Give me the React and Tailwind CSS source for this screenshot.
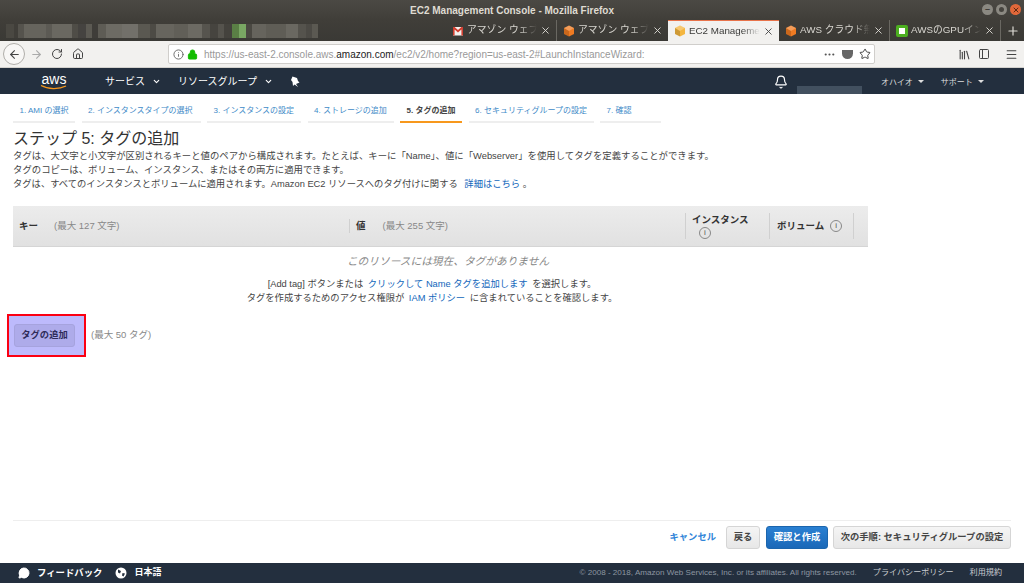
import React from "react";
import { ArrowLeft, ArrowRight, RotateCw, Home, Info, Lock, Star, Library, PanelLeft, Menu, X, Plus, Bell, ChevronDown, MessageCircle, Ellipsis } from "lucide-react";

const font = "font-['Liberation_Sans','Noto_Sans_CJK_JP',sans-serif]";

const blurred = [
  [8, "#4a4842"], [4, "#403e39"], [6, "#55534d"], [22, "#66645d"], [6, "#5c5a54"], [20, "#6a6861"], [6, "#4f4d47"], [8, "#454340"],
  [6, "#5c5a53"], [6, "#3f3d39"], [8, "#5e5c55"], [16, "#6d6b64"], [16, "#72706a"], [12, "#5a5851"], [6, "#4d4b45"], [18, "#67655e"],
  [14, "#615f58"], [14, "#6c6a63"], [8, "#56544e"], [8, "#46443f"], [6, "#55534d"], [8, "#44423d"], [7, "#5a7f45"], [7, "#79a763"],
  [6, "#4a4842"], [14, "#66645d"], [20, "#5f5d56"], [12, "#6a6861"], [8, "#55534d"], [6, "#4c4a45"], [6, "#5b5952"],
];

function BrowserTab({ icon, label, active, sep = true }) {
  if (active) {
    return (
      <div className="flex h-[21px] w-[111px] items-center gap-[3px] border-t border-[#e8734a] bg-[#f2f1ef] pl-[6px] pr-[5px] text-[9.8px] text-[#3a3a38]">
        {icon}
        <span className="flex-1 overflow-hidden whitespace-nowrap [mask-image:linear-gradient(to_right,black_75%,transparent)]">{label}</span>
        <X size={11} strokeWidth={2} className="shrink-0 text-[#444]" />
      </div>
    );
  }
  return (
    <div className={`flex h-[21px] w-[111px] items-center gap-[3px] pl-[6px] pr-[5px] text-[9.8px] text-[#d8d6d0] ${sep ? "border-r border-[#6a6862]" : ""}`}>
      {icon}
      <span className="flex-1 overflow-hidden whitespace-nowrap [mask-image:linear-gradient(to_right,black_75%,transparent)]">{label}</span>
      <X size={11} strokeWidth={2} className="shrink-0 text-[#dedcd6]" />
    </div>
  );
}

function Cube({ color = "#ef7b22" }) {
  return (
    <svg width="12" height="12" viewBox="0 0 12 12" className="shrink-0">
      <path d="M6 0.5 11 3v6l-5 2.5L1 9V3z" fill={color} />
      <path d="M6 6v5.5L1 9V3z" fill="#000" fillOpacity="0.15" />
      <path d="M6 0.5 11 3 6 6 1 3z" fill="#fff" fillOpacity="0.25" />
    </svg>
  );
}

function Gmail() {
  return (
    <svg width="12" height="12" viewBox="0 0 12 12" className="shrink-0">
      <rect x="1" y="2" width="10" height="8.5" fill="#f5f2ef" />
      <path d="M1 2h1.6L6 5l3.4-3H11v8.5H9.4V4.6L6 7.4 2.6 4.6v5.9H1z" fill="#d23f31" />
    </svg>
  );
}

function Caret() {
  return <span className="ml-[5px] h-0 w-0 border-x-[3px] border-t-[3px] border-x-transparent border-t-[#dddddd]" />;
}

function WizardStep({ label, active, width }) {
  return (
    <div className={`flex h-[29px] items-center border-b-2 pl-[6.5px] pt-[7px] text-[8px] ${active ? "border-[#f7981d] font-bold text-[#444]" : "border-[#eeeeee] text-[#3f8bc8]"} ${width}`}>
      {label}
    </div>
  );
}

function InfoDot({ className = "" }) {
  return (
    <span className={`inline-flex h-[12px] w-[12px] items-center justify-center rounded-full border border-[#888] text-[8px] leading-none text-[#555] ${className}`}>
      i
    </span>
  );
}

export default function App() {
  return (
    <div className={`flex h-[583px] w-[1024px] flex-col overflow-hidden bg-white ${font}`}>
      {/* window title */}
      <div className="relative flex h-5 shrink-0 items-center justify-center bg-gradient-to-b from-[#4b4944] to-[#403e39] text-[10px] font-bold text-[#dfdbd2]">
        EC2 Management Console - Mozilla Firefox
        <div className="absolute right-[3px] top-[4px] flex gap-[3px]">
          <span className="flex h-[11px] w-[11px] items-center justify-center rounded-full bg-[#8b8982] text-[9px] leading-none text-[#3f3d38]">–</span>
          <span className="h-[11px] w-[11px] rounded-full border-[3px] border-[#8b8982]" />
          <span className="flex h-[11px] w-[11px] items-center justify-center rounded-full bg-[#e2683a] text-[#5a2a14]"><X size={8} strokeWidth={3} /></span>
        </div>
      </div>

      {/* tabs */}
      <div className="flex h-[21px] shrink-0 items-end bg-gradient-to-b from-[#403e39] to-[#3a3935]">
        <div className="flex h-[14px] w-[446px] shrink-0 self-center pl-[6px]">
          {blurred.map(([w, c], i) => (
            <div key={i} className="h-full" style={{ width: w, background: c }} />
          ))}
        </div>
        <BrowserTab icon={<Gmail />} label="アマゾン ウェブ" />
        <BrowserTab icon={<Cube />} label="アマゾン ウェブ" sep={false} />
        <BrowserTab icon={<Cube color="#f4b63f" />} label="EC2 Management" active />
        <BrowserTab icon={<Cube />} label="AWS クラウド無" />
        <BrowserTab icon={<span className="h-3 w-3 shrink-0 rounded-[2px] border-[3px] border-[#4caf20] bg-white" />} label="AWSのGPUイン" />
        <div className="flex h-[21px] flex-1 items-center justify-center text-[#dedcd6]"><Plus size={14} strokeWidth={2} /></div>
      </div>

      {/* toolbar */}
      <div className="flex h-[27px] shrink-0 items-center border-b border-[#d4d2ce] bg-[#f2f1ef] text-[#444]">
        <div className="ml-[3px] flex h-[22px] w-[22px] items-center justify-center rounded-full border border-[#b0aeaa] bg-[#f8f7f6]"><ArrowLeft size={13} /></div>
        <ArrowRight size={13} className="ml-[5px] text-[#aaa]" />
        <RotateCw size={12} className="ml-[8px]" />
        <Home size={12} className="ml-[9px]" />
        <div className="ml-[84px] flex h-[20px] w-[707px] items-center rounded-[2px] border border-[#d0cecb] bg-white pl-[4px] pr-[3px] text-[10px] text-[#999]">
          <Info size={11} className="text-[#666]" />
          <Lock size={11} className="ml-[3px] fill-[#12bc00] text-[#12bc00]" />
          <span className="ml-[6px] flex-1 whitespace-nowrap">https://us-east-2.console.aws.<span className="text-[#222]">amazon.com</span>/ec2/v2/home?region=us-east-2#LaunchInstanceWizard:</span>
          <Ellipsis size={13} className="text-[#555]" />
          <span className="ml-[6px] h-[9px] w-[11px] rounded-b-md bg-[#666]" />
          <Star size={12} className="ml-[6px] text-[#444]" />
        </div>
        <Library size={13} className="ml-[83px]" />
        <PanelLeft size={12} className="ml-[7px]" />
        <Menu size={13} className="ml-[15px]" />
      </div>

      {/* aws nav */}
      <div className="flex h-[26px] shrink-0 items-center bg-[#232f3e] text-white">
        <div className="ml-[40px] flex w-[28px] flex-col items-center">
          <span className="text-[14px] leading-[12px]">aws</span>
          <svg width="28" height="5" viewBox="0 0 28 5"><path d="M1 0.5C8 4.5 19 4.5 26 1" fill="none" stroke="#f7981d" strokeWidth="1.3" /></svg>
        </div>
        <span className="ml-[37px] text-[10px]">サービス</span>
        <ChevronDown size={9} strokeWidth={3} className="ml-[7px]" />
        <span className="ml-[17px] text-[10px]">リソースグループ</span>
        <ChevronDown size={9} strokeWidth={3} className="ml-[7px]" />
        <svg width="10" height="11" viewBox="0 0 10 11" className="ml-[17px] mt-[1px]"><path d="M2.5 0.5 7 2 8 5l1.5 1.5L6 8l2 3-3.5-2.5L3 10 2.5 6 1 4z" fill="#fff" /></svg>
        <Bell size={14} className="ml-[474px] mt-[2px]" />
        <div className="ml-[9px] h-[8px] w-[65px] self-end bg-[#42505f]" />
        <span className="ml-[19px] mt-[3px] text-[8px] text-[#dddddd]">オハイオ</span>
        <Caret />
        <span className="ml-[17px] mt-[3px] text-[8px] text-[#dddddd]">サポート</span>
        <Caret />
      </div>

      {/* wizard steps */}
      <div className="flex shrink-0 gap-[6.5px] pl-[13px]">
        <WizardStep label="1. AMI の選択" width="w-[62px]" />
        <WizardStep label="2. インスタンスタイプの選択" width="w-[119px]" />
        <WizardStep label="3. インスタンスの設定" width="w-[94px]" />
        <WizardStep label="4. ストレージの追加" width="w-[86px]" />
        <WizardStep label="5. タグの追加" active width="w-[62px]" />
        <WizardStep label="6. セキュリティグループの設定" width="w-[125px]" />
        <WizardStep label="7. 確認" width="w-[61px]" />
      </div>

      {/* main */}
      <div className="flex min-h-0 flex-1 flex-col px-[13px]">
        <h1 className="mt-[5px] text-[16px] leading-[22px] text-[#333]">ステップ 5: タグの追加</h1>
        <div className="-mt-[1px] text-[9.4px] leading-[14px] text-[#444]">
          <p>タグは、大文字と小文字が区別されるキーと値のペアから構成されます。たとえば、キーに「Name」、値に「Webserver」を使用してタグを定義することができます。</p>
          <p>タグのコピーは、ボリューム、インスタンス、またはその両方に適用できます。</p>
          <p className="text-[9.3px]">タグは、すべてのインスタンスとボリュームに適用されます。Amazon EC2 リソースへのタグ付けに関する <span className="ml-[4px] text-[#1166bb]">詳細はこちら</span> 。</p>
        </div>

        <div className="mt-[15px] flex h-[41px] w-[855px] shrink-0 items-center border-b border-[#d5d5d5] bg-gradient-to-b from-[#ececec] to-[#e1e1e1] text-[9.5px]">
          <div className="flex w-[336px] items-center pl-[6px]">
            <span className="font-bold text-[#333]">キー</span>
            <span className="ml-[16px] text-[#888]">(最大 127 文字)</span>
          </div>
          <div className="flex h-[14px] w-[336px] items-center border-l border-[#d0d0d0] pl-[6px]">
            <span className="font-bold text-[#333]">値</span>
            <span className="ml-[17px] text-[#888]">(最大 255 文字)</span>
          </div>
          <div className="flex h-[26px] w-[84px] flex-col items-start border-l border-[#d0d0d0] pl-[6px] leading-[13px]">
            <span className="font-bold text-[#333]">インスタンス</span>
            <InfoDot className="ml-[7px] mt-[1px]" />
          </div>
          <div className="flex h-[26px] w-[85px] items-center border-x border-[#d0d0d0] pl-[7px]">
            <span className="font-bold text-[#333]">ボリューム</span>
            <InfoDot className="ml-[6px]" />
          </div>
        </div>

        <div className="w-[855px] text-center text-[9.3px] text-[#444]">
          <p className="mt-[6px] pl-[15px] text-[10.7px] italic text-[#888]">このリソースには現在、タグがありません</p>
          <p className="mt-[8px] pr-[17px] leading-[14px]">[Add tag] ボタンまたは <span className="mx-[2px] text-[#1166bb]">クリックして Name タグを追加します</span> を選択します。</p>
          <p className="pr-[17px] leading-[14px]">タグを作成するためのアクセス権限が <span className="mx-[2px] text-[#1166bb]">IAM ポリシー</span> に含まれていることを確認します。</p>
        </div>

        <div className="mt-[9px] flex items-center">
          <div className="relative -ml-[6px] flex h-[43px] w-[79px] items-center justify-center border-2 border-[#fb0012] bg-[#bdbafc]">
            <div className="-ml-[4px] flex h-[23px] w-[61px] items-center justify-center rounded-[3px] border border-[#a6a3de] bg-[#aeabea] text-[9.3px] font-bold text-[#2f2c59]">
              タグの追加
            </div>
          </div>
          <span className="ml-[5px] text-[9.5px] text-[#888]">(最大 50 タグ)</span>
        </div>

        <div className="mt-auto flex h-[43px] shrink-0 items-center justify-end border-t border-[#eeeeee] pb-[9px] text-[9.3px] font-bold">
          <span className="text-[#2f84d8]">キャンセル</span>
          <button className="ml-[10px] h-[23px] w-[34px] rounded-[3px] border border-[#d5d5d5] bg-gradient-to-b from-[#f5f5f5] to-[#e7e7e7] text-[#444]">戻る</button>
          <button className="ml-[6px] h-[23px] w-[62px] rounded-[3px] border border-[#1b65ad] bg-gradient-to-b from-[#2a80d2] to-[#1a68b8] text-white">確認と作成</button>
          <button className="ml-[5px] h-[23px] w-[178px] rounded-[3px] border border-[#d5d5d5] bg-gradient-to-b from-[#f5f5f5] to-[#e7e7e7] text-[#444]">次の手順: セキュリティグループの設定</button>
        </div>
      </div>

      {/* footer */}
      <div className="flex h-[20px] shrink-0 items-center bg-[#232f3e] text-white">
        <MessageCircle size={12} className="ml-[18px] fill-white" />
        <span className="ml-[7px] text-[9.4px] font-bold">フィードバック</span>
        <svg width="12" height="12" viewBox="0 0 12 12" className="ml-[13px]">
          <circle cx="6" cy="6" r="5.5" fill="#fff" />
          <path d="M3 2.5 6 4 5 6.5 3 5.5zM7.5 6 10 6.5 8.5 9.5 7 8.5z" fill="#232f3e" />
        </svg>
        <span className="ml-[7px] text-[9px] font-bold">日本語</span>
        <span className="ml-auto text-[8.1px] text-[#8d96a0]">© 2008 - 2018, Amazon Web Services, Inc. or its affiliates. All rights reserved.</span>
        <span className="ml-[16px] text-[8.1px] text-[#c8ccd0]">プライバシーポリシー</span>
        <span className="ml-[16px] mr-[22px] text-[8.1px] text-[#c8ccd0]">利用規約</span>
      </div>
    </div>
  );
}
